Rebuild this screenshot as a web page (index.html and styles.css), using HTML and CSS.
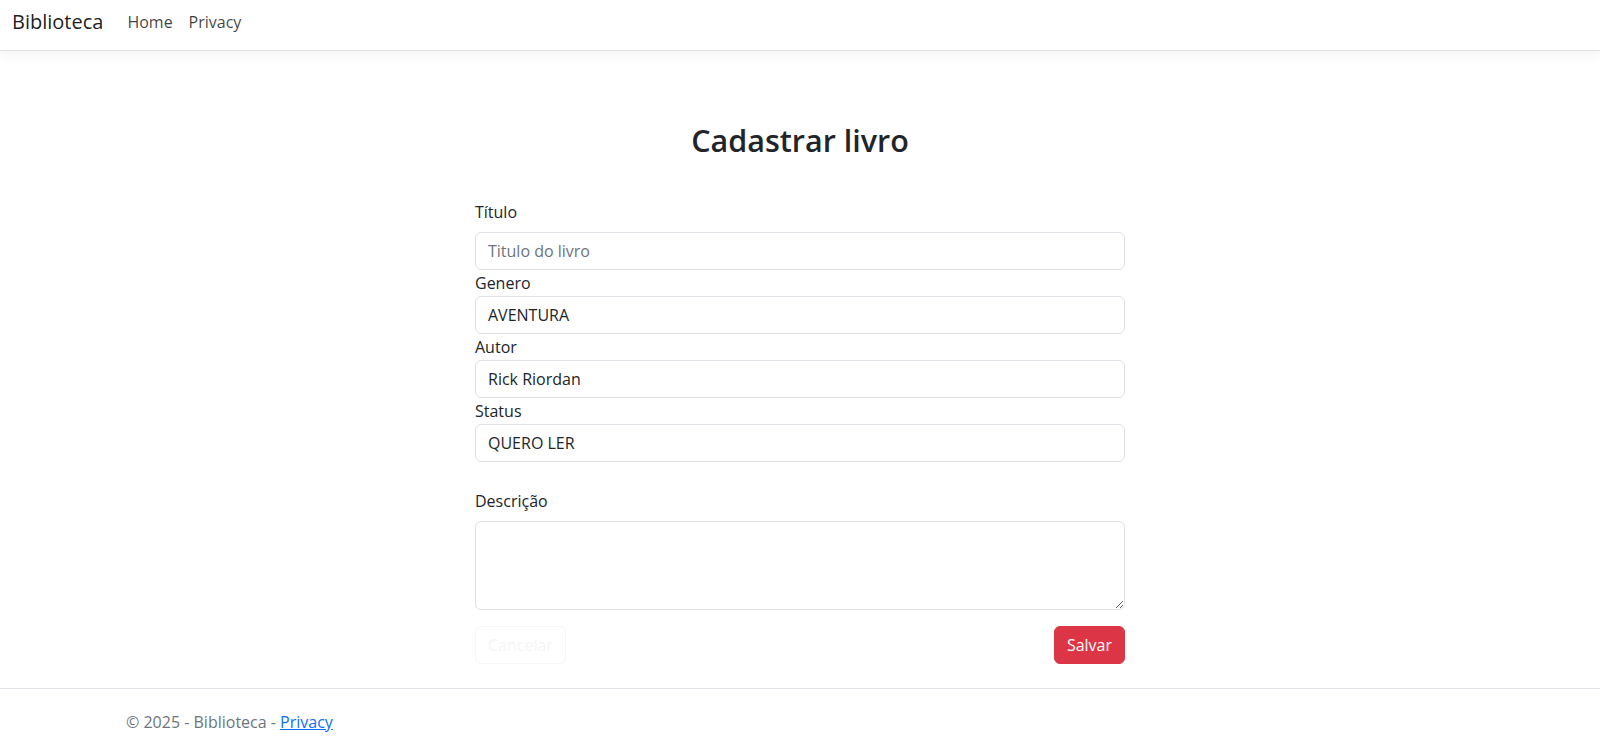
FILE: index.html
```html
<!DOCTYPE html>
<html lang="pt-br">
<head>
<meta charset="utf-8">
<title>Cadastrar livro - Biblioteca</title>
<link rel="stylesheet" href="styles.css">
</head>
<body>
<header class="navbar">
  <a class="brand" href="#">Biblioteca</a>
  <nav class="nav-links">
    <a class="nav-link" href="#">Home</a>
    <a class="nav-link" href="#">Privacy</a>
  </nav>
</header>
<main class="page">
  <h2 class="title">Cadastrar livro</h2>
  <form class="book-form">
    <div class="field field-first">
      <label class="label-first" for="titulo">Título</label>
      <input class="control" id="titulo" type="text" placeholder="Titulo do livro">
    </div>
    <div class="field">
      <label class="label" for="genero">Genero</label>
      <input class="control" id="genero" type="text" value="AVENTURA">
    </div>
    <div class="field">
      <label class="label" for="autor">Autor</label>
      <input class="control" id="autor" type="text" value="Rick Riordan">
    </div>
    <div class="field field-last">
      <label class="label" for="status">Status</label>
      <input class="control" id="status" type="text" value="QUERO LER">
    </div>
    <div class="field field-desc">
      <label class="label-first" for="descricao">Descrição</label>
      <textarea class="control textarea" id="descricao"></textarea>
    </div>
    <div class="actions">
      <button type="button" class="btn btn-light-outline">Cancelar</button>
      <button type="submit" class="btn btn-danger">Salvar</button>
    </div>
  </form>
</main>
<footer class="footer">
  <div class="footer-inner">© 2025 - Biblioteca - <a href="#">Privacy</a></div>
</footer>
</body>
</html>
```

FILE: styles.css
```css
* { box-sizing: border-box; }

html, body {
  margin: 0;
  padding: 0;
  background: #fff;
}

body {
  font-family: "Open Sans", "Noto Sans", "Liberation Sans", sans-serif;
  font-size: 16px;
  line-height: 1.5;
  color: #212529;
}

.navbar {
  display: flex;
  align-items: center;
  height: 51px;
  padding: 0 12px 7px 12px;
  background: #fff;
  border-bottom: 1px solid #dee2e6;
  box-shadow: 0 4px 12px rgba(0, 0, 0, 0.05);
}

.brand {
  font-size: 20px;
  line-height: 30px;
  color: rgba(0, 0, 0, 0.9);
  text-decoration: none;
  margin-right: 16px;
}

.nav-links {
  display: flex;
}

.nav-link {
  padding: 0 8px;
  font-size: 16px;
  color: rgba(0, 0, 0, 0.75);
  text-decoration: none;
}

.page {
  display: flex;
  flex-direction: column;
  align-items: center;
  padding-top: 70px;
}

.title {
  margin: 0;
  font-size: 30.5px;
  font-weight: 600;
  line-height: 38px;
  color: #212529;
}

.book-form {
  width: 650px;
  margin-top: 41px;
  display: flex;
  flex-direction: column;
}

.field {
  display: flex;
  flex-direction: column;
}

.label-first {
  line-height: 24px;
  margin-bottom: 8px;
}

.label {
  line-height: 26px;
}

.field-last {
  margin-bottom: 27px;
}

.control {
  display: block;
  width: 100%;
  height: 38px;
  padding: 6px 12px;
  font-family: inherit;
  font-size: 16px;
  line-height: 24px;
  color: #212529;
  background: #fff;
  border: 1px solid #dee2e6;
  border-radius: 6px;
  outline: none;
}

.control::placeholder {
  color: #6c757d;
  opacity: 1;
}

.textarea {
  height: 89px;
  resize: vertical;
}

.actions {
  display: flex;
  justify-content: space-between;
  margin-top: 16px;
  margin-bottom: 24px;
}

.btn {
  height: 38px;
  padding: 6px 12px;
  font-family: inherit;
  font-size: 16px;
  line-height: 24px;
  border-radius: 6px;
  border: 1px solid transparent;
  cursor: pointer;
}

.btn-light-outline {
  background: #fff;
  color: #f5f6f7;
  border-color: #f5f6f7;
}

.btn-danger {
  background: #dc3545;
  color: #fff;
  border-color: #dc3545;
}

.footer {
  border-top: 1px solid #dee2e6;
  line-height: 60px;
  color: #6c757d;
}

.footer-inner {
  padding: 3px 126px 0;
}

.footer-inner a {
  color: #0d6efd;
}
```
